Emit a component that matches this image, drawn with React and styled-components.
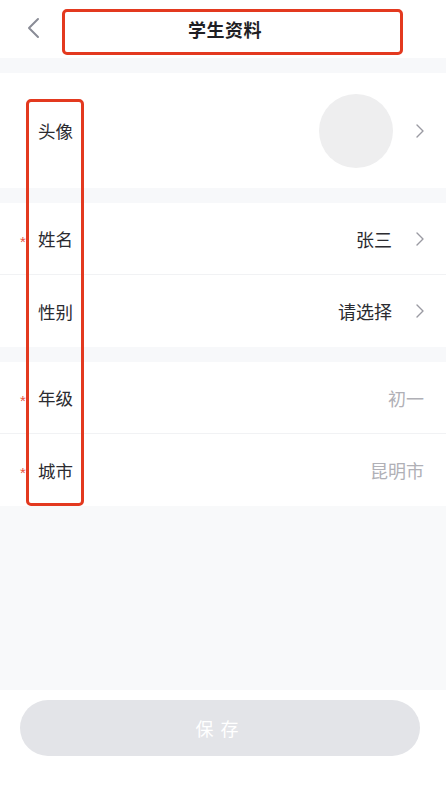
import React from "react";
import styled, { createGlobalStyle } from "styled-components";

const Global = createGlobalStyle`
  html, body { margin: 0; padding: 0; background: #ffffff; }
  body { font-family: "Noto Sans CJK SC", "Noto Sans", sans-serif; }
  * { box-sizing: border-box; }
`;

const Page = styled.div`
  position: relative;
  width: 446px;
  height: 792px;
  display: flex;
  flex-direction: column;
  background: #ffffff;
  overflow: hidden;
`;

const NavBar = styled.div`
  height: 58px;
  display: flex;
  align-items: center;
  justify-content: center;
  position: relative;
`;

const BackButton = styled.div`
  position: absolute;
  left: 26px;
  top: 17px;
  width: 14px;
  height: 22px;
  display: flex;
`;

const Title = styled.div`
  font-size: 18px;
  font-weight: 700;
  color: #1f1f24;
  letter-spacing: 0.5px;
  margin-left: 4px;
`;

const Gap = styled.div`
  height: ${(p) => p.$h || 15}px;
  background: #f7f8fa;
  flex-shrink: 0;
`;

const Section = styled.div`
  background: #ffffff;
  display: flex;
  flex-direction: column;
`;

const Row = styled.div`
  height: ${(p) => p.$h || 72}px;
  display: flex;
  align-items: center;
  padding: 0 22px 0 20px;
  border-bottom: ${(p) => (p.$line ? "1px solid #f1f2f4" : "none")};
`;

const Mark = styled.span`
  width: 18px;
  flex-shrink: 0;
  color: #e8523e;
  font-family: "Liberation Sans", sans-serif;
  font-size: 15px;
  line-height: 1;
  padding-top: 5px;
`;

const Label = styled.span`
  font-size: 17.5px;
  color: #2b2b30;
  flex: 1;
`;

const Value = styled.span`
  font-size: 18px;
  color: ${(p) => (p.$muted ? "#b0b0b6" : "#2b2b30")};
`;

const Avatar = styled.div`
  width: 74px;
  height: 74px;
  border-radius: 50%;
  background: #eeeeef;
`;

const ChevronWrap = styled.span`
  display: flex;
  margin-left: ${(p) => p.$ml || 24}px;
  width: 8px;
`;

const Filler = styled.div`
  flex: 1;
  background: #f8f9fa;
`;

const Footer = styled.div`
  height: 102px;
  padding: 10px 26px 0 20px;
  background: #ffffff;
`;

const SaveButton = styled.button`
  width: 100%;
  height: 56px;
  border: none;
  border-radius: 28px;
  background: #e3e4e8;
  color: #ffffff;
  font-family: inherit;
  font-size: 18px;
  letter-spacing: 7px;
  padding-left: 7px;
`;

const Annotation = styled.div`
  position: absolute;
  left: ${(p) => p.$x}px;
  top: ${(p) => p.$y}px;
  width: ${(p) => p.$w}px;
  height: ${(p) => p.$h}px;
  border: 3px solid #e3391f;
  border-radius: 5px;
  pointer-events: none;
`;

const Chevron = () => (
  <svg width="8" height="14" viewBox="0 0 8 14">
    <polyline points="1,1 7,7 1,13" fill="none" stroke="#9a9aa2" strokeWidth="1.4" strokeLinecap="round" strokeLinejoin="round" />
  </svg>
);

const BackIcon = () => (
  <svg width="14" height="22" viewBox="0 0 14 22">
    <polyline points="12,2 3,11 12,20" fill="none" stroke="#8a8c96" strokeWidth="2" strokeLinecap="round" strokeLinejoin="round" />
  </svg>
);

export default function App() {
  return (
    <>
      <Global />
      <Page>
        <NavBar>
          <BackButton>
            <BackIcon />
          </BackButton>
          <Title>学生资料</Title>
        </NavBar>
        <Gap $h={15} />
        <Section>
          <Row $h={115}>
            <Mark />
            <Label>头像</Label>
            <Avatar />
            <ChevronWrap $ml={23}>
              <Chevron />
            </ChevronWrap>
          </Row>
        </Section>
        <Gap $h={15} />
        <Section>
          <Row $line>
            <Mark>*</Mark>
            <Label>姓名</Label>
            <Value>张三</Value>
            <ChevronWrap>
              <Chevron />
            </ChevronWrap>
          </Row>
          <Row>
            <Mark />
            <Label>性别</Label>
            <Value>请选择</Value>
            <ChevronWrap>
              <Chevron />
            </ChevronWrap>
          </Row>
        </Section>
        <Gap $h={15} />
        <Section>
          <Row $line>
            <Mark>*</Mark>
            <Label>年级</Label>
            <Value $muted>初一</Value>
          </Row>
          <Row>
            <Mark>*</Mark>
            <Label>城市</Label>
            <Value $muted>昆明市</Value>
          </Row>
        </Section>
        <Filler />
        <Footer>
          <SaveButton>保存</SaveButton>
        </Footer>
        <Annotation $x={62} $y={9} $w={341} $h={46} />
        <Annotation $x={26} $y={99} $w={58} $h={407} />
      </Page>
    </>
  );
}
